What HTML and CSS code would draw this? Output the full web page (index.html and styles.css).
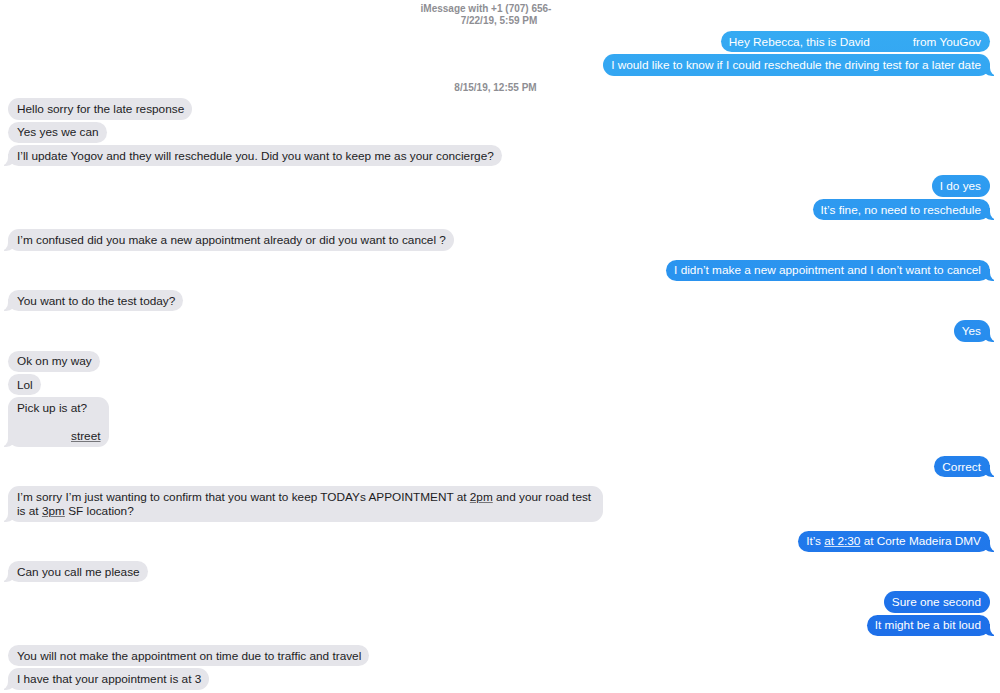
FILE: index.html
```html
<!DOCTYPE html>
<html lang="en">
<head>
  <meta charset="UTF-8" />
  <title>Messages</title>
  <link rel="stylesheet" href="styles.css">
</head>
<body>
  <div class="chat">
    <div class="chat-header">
      <div class="header-title">iMessage with +1 (707) 656-</div>
      <div>7/22/19, 5:59 PM</div>
    </div>

    <div class="group sent">
      <div class="msg">Hey Rebecca, this is David<span class="redact name-gap"></span>from YouGov</div>
      <div class="msg">I would like to know if I could reschedule the driving test for a later date</div>
    </div>

    <div class="stamp">8/15/19, 12:55 PM</div>

    <div class="group recv first">
      <div class="msg">Hello sorry for the late response</div>
      <div class="msg">Yes yes we can</div>
      <div class="msg">I’ll update Yogov and they will reschedule you. Did you want to keep me as your concierge?</div>
    </div>

    <div class="group sent">
      <div class="msg">I do yes</div>
      <div class="msg">It’s fine, no need to reschedule</div>
    </div>

    <div class="group recv">
      <div class="msg">I’m confused did you make a new appointment already or did you want to cancel ?</div>
    </div>

    <div class="group sent">
      <div class="msg">I didn’t make a new appointment and I don’t want to cancel</div>
    </div>

    <div class="group recv">
      <div class="msg">You want to do the test today?</div>
    </div>

    <div class="group sent">
      <div class="msg">Yes</div>
    </div>

    <div class="group recv">
      <div class="msg">Ok on my way</div>
      <div class="msg">Lol</div>
      <div class="msg">Pick up is at?<br><br><span class="redact street-gap"></span><span class="link">street</span></div>
    </div>

    <div class="group sent">
      <div class="msg">Correct</div>
    </div>

    <div class="group recv">
      <div class="msg wide">I’m sorry I’m just wanting to confirm that you want to keep TODAYs APPOINTMENT at <span class="link">2pm</span> and your road test is at <span class="link">3pm</span> SF location?</div>
    </div>

    <div class="group sent">
      <div class="msg">It’s <span class="link">at 2:30</span> at Corte Madeira DMV</div>
    </div>

    <div class="group recv">
      <div class="msg">Can you call me please</div>
    </div>

    <div class="group sent">
      <div class="msg">Sure one second</div>
      <div class="msg">It might be a bit loud</div>
    </div>

    <div class="group recv">
      <div class="msg">You will not make the appointment on time due to traffic and travel</div>
      <div class="msg">I have that your appointment is at 3</div>
    </div>
  </div>
</body>
</html>
```

FILE: styles.css
```css
body {
  margin: 0;
  background: #fff;
  font-family: 'Liberation Sans', Arial, sans-serif;
  font-size: 11.8px;
  color: #1c1c1e;
  overflow: hidden;
}
.chat {
  display: flex;
  flex-direction: column;
  padding: 3px 10px 0 8px;
}
.chat-header {
  text-align: center;
  color: #8e8e93;
  font-size: 10px;
  font-weight: 700;
  line-height: 12px;
  margin-bottom: 4px;
}
.header-title {
  padding-right: 26px;
}
.stamp {
  text-align: center;
  color: #8e8e93;
  font-size: 10px;
  font-weight: 700;
  line-height: 12px;
  margin: 6px 0 4.6px;
  padding-right: 7px;
}
.group {
  display: flex;
  flex-direction: column;
  gap: 2px;
  margin-top: 9px;
}
.chat-header + .group,
.stamp + .group {
  margin-top: 0;
}
.group.sent {
  align-items: flex-end;
}
.group.recv {
  align-items: flex-start;
}
.msg {
  position: relative;
  padding: 3.7px 8px 3.7px 9px;
  line-height: 14px;
  border-radius: 11px;
  max-width: 590px;
}
.msg.wide {
  max-width: 578px;
}
.recv .msg {
  background: #e5e5ea;
  color: #1c1c1e;
}
.sent .msg {
  color: #fff;
  background: linear-gradient(to bottom, #37adf3 0%, #2a93ef 40%, #1b69e8 100%) fixed;
  padding: 3.7px 9px 3.7px 8px;
}
.redact {
  display: inline-block;
}
.name-gap {
  width: 43px;
}
.street-gap {
  width: 54px;
}
.link {
  text-decoration: underline;
  text-decoration-thickness: 1px;
  text-underline-offset: 1px;
}
.sent .link {
  text-decoration-color: rgba(255,255,255,0.8);
}
.recv .link {
  text-decoration-color: rgba(28,28,30,0.55);
}

/* tails on the last bubble of each group */
.group .msg:last-child::before,
.group .msg:last-child::after {
  content: "";
  position: absolute;
  bottom: 0;
  height: 12px;
}
.sent .msg:last-child::before {
  right: -4px;
  width: 12px;
  background: linear-gradient(to bottom, #37adf3 0%, #2a93ef 40%, #1b69e8 100%) fixed;
  border-bottom-left-radius: 10px 9px;
}
.sent .msg:last-child::after {
  right: -10px;
  width: 10px;
  background: #fff;
  border-bottom-left-radius: 8px;
}
.recv .msg:last-child::before {
  left: -4px;
  width: 12px;
  background: #e5e5ea;
  border-bottom-right-radius: 10px 9px;
}
.recv .msg:last-child::after {
  left: -10px;
  width: 10px;
  background: #fff;
  border-bottom-right-radius: 8px;
}
```
